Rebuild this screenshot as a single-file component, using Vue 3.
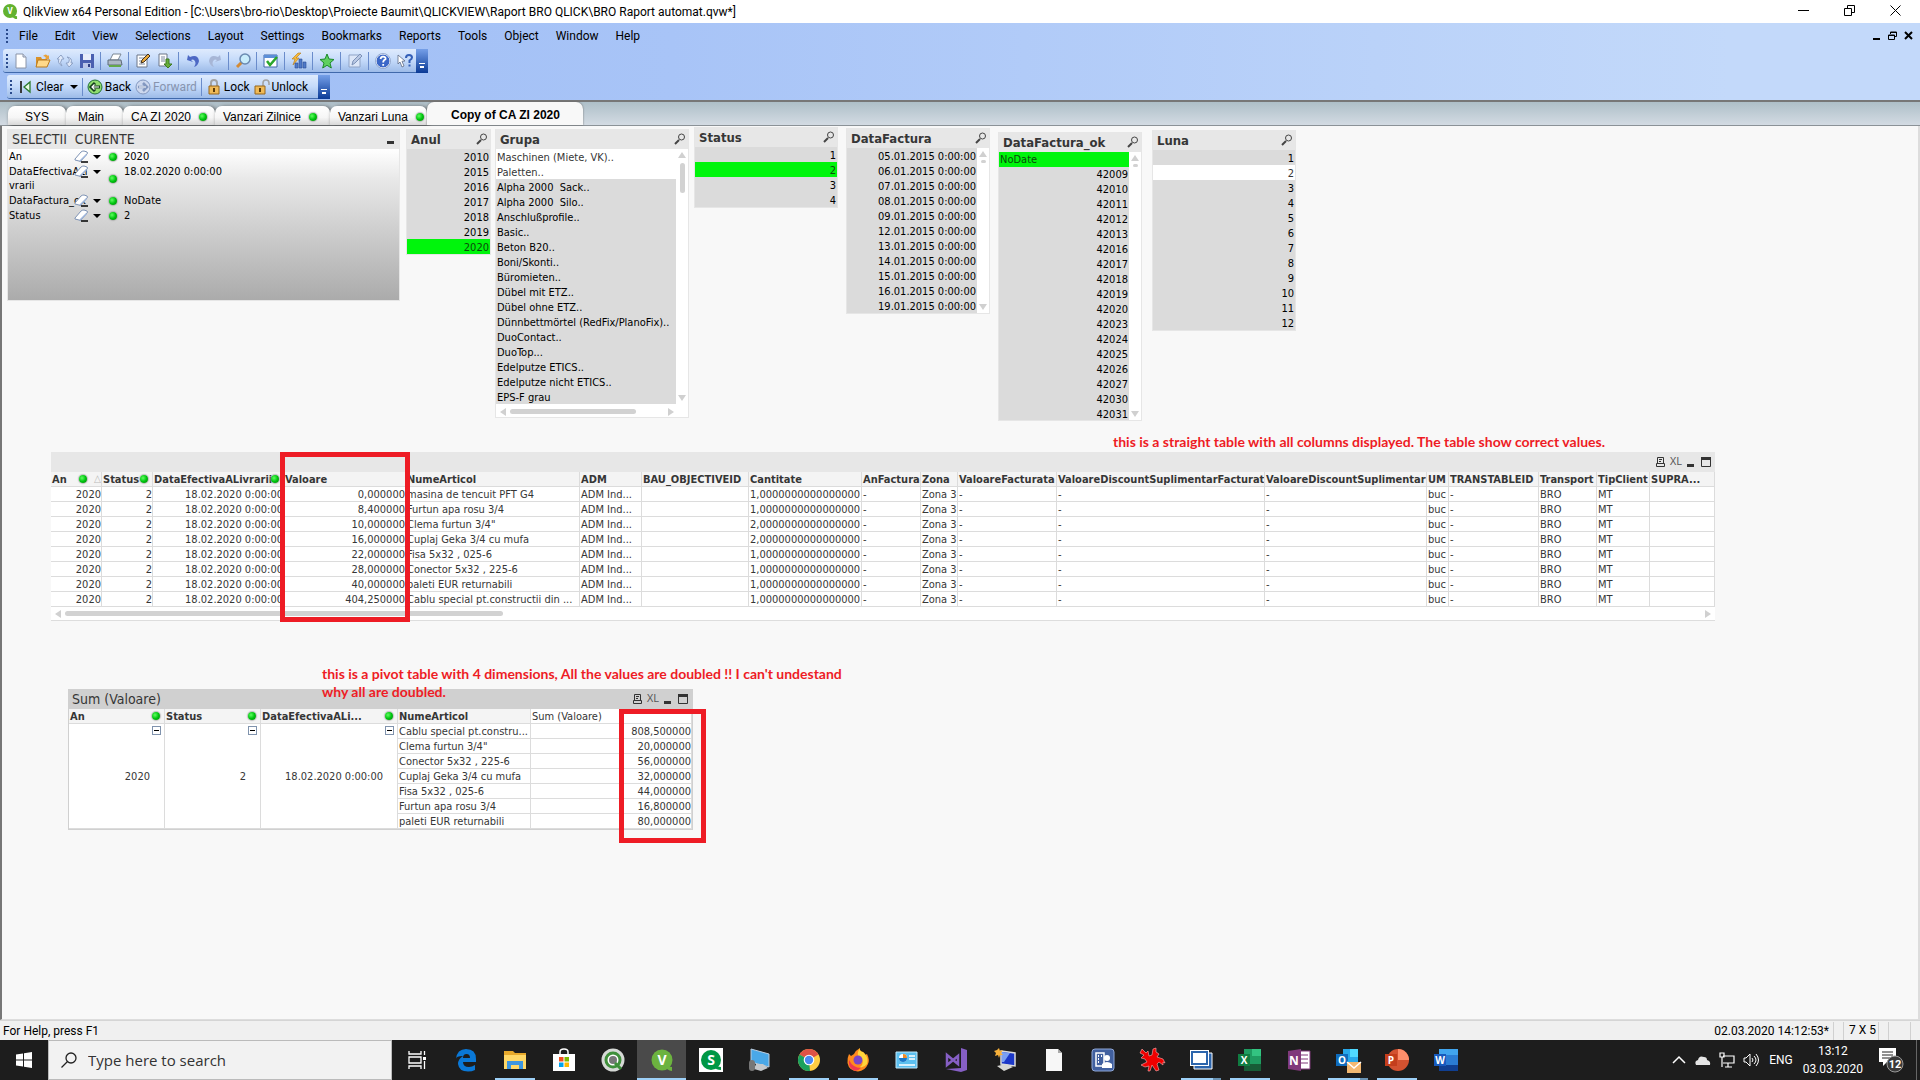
<script setup>
const menus = ['File', 'Edit', 'View', 'Selections', 'Layout', 'Settings', 'Bookmarks', 'Reports', 'Tools', 'Object', 'Window', 'Help']

const glyphs = {
  new: '<path d="M3 1h7l3 3v11H3z" fill="#fff" stroke="#8a94a8"/><path d="M10 1v3h3" fill="#d5dceb" stroke="#8a94a8"/>',
  open: '<path d="M1 4h5l1 2h5v8H1z" fill="#d9922a"/><path d="M3 7h12l-3 7H1z" fill="#ffd98a" stroke="#b87a20"/><path d="M8 3q3-3 5 0l1-1v4h-4l1-1q-1-2-3-2z" fill="#e9a23b"/>',
  reload: '<path d="M5 13q-3-3 0-7h2L4 2 0 6h2q-2 4 3 7z" fill="#dfe8f8" stroke="#8fa3c6"/><path d="M10 4q4 2 1 6H9l3 4 4-4h-2q2-5-4-6z" fill="#dfe8f8" stroke="#8fa3c6"/>',
  save: '<path d="M1 1h14v14H1z" fill="#4a5fb0"/><path d="M4 1h8v6H4z" fill="#e8edfa"/><path d="M4 10h8v5H4z" fill="#b9c4e6"/><path d="M9 11h2v3H9z" fill="#2d3d85"/>',
  print: '<path d="M6 1h8l-3 6H3z" fill="#fff" stroke="#7b8794"/><path d="M1 7h13l1 5H1z" fill="#aeb9c6" stroke="#5f6c7a"/><path d="M2 12h12v2H2z" fill="#63a84a"/>',
  edit: '<path d="M2 2h10v12H2z" fill="#fff" stroke="#6d7788"/><path d="M4 5h5M4 8h5M4 11h6" stroke="#7e8aa0"/><path d="M6 10l1-3 6-6 2 2-6 6z" fill="#e8a83a" stroke="#403020"/>',
  load: '<path d="M2 1h8v12H2z" fill="#fff" stroke="#6d7788"/><path d="M4 4h4M4 6h4M4 8h4" stroke="#7e8aa0"/><path d="M9 6h3v5h3l-4 4-4-4h2z" fill="#66ad3a" stroke="#3d7a20"/>',
  undo: '<path d="M2 7l1-5 2 2q8-3 9 4-1 5-5 6 3-4 0-7-1-1-3 0l2 2z" fill="#4d68c4"/>',
  redo: '<path d="M14 7l-1-5-2 2Q3 1 2 8q1 5 5 6-3-4 0-7 1-1 3 0L8 9z" fill="#a7b6d6"/>',
  search: '<path d="M2 14l5-5" stroke="#d48b35" stroke-width="3"/><circle cx="10" cy="6" r="5" fill="#c8ecfb" stroke="#6a89b0" stroke-width="1.500"/>',
  check: '<path d="M1 2h13v12H1z" fill="#fff" stroke="#4167a8"/><path d="M1 2h13v3H1z" fill="#5c8fd8"/><path d="M4 8l3 4 7-8" fill="none" stroke="#2aa62a" stroke-width="2.500"/>',
  chart: '<path d="M7 0L1 6h3l-2 6 6-7H5l5-5z" fill="#f6b93b" stroke="#b47a1a" stroke-width=".6"/><path d="M4 10h3v5H4zM8 6h3v9H8zM12 9h3v6h-3z" fill="#4f79c8" stroke="#2b4d94" stroke-width=".6"/>',
  star: '<path d="M8 1l2 5 5 .5-4 3.500 1.300 5L8 12.300 3.700 15 5 10 1 6.500 6 6z" fill="#5fd060" stroke="#1d8a2a"/>',
  note: '<path d="M2 2h11v12H2z" fill="#dce6f8" stroke="#8fa3c6"/><path d="M5 12l1-4 7-7 2 2-7 7z" fill="#b9c8e4" stroke="#7d92b8"/>',
  help: '<circle cx="8" cy="8" r="7" fill="#3b67c8" stroke="#fff"/><circle cx="8" cy="8" r="7.500" fill="none" stroke="#7890bd" stroke-width=".7"/><path d="M5.500 6Q6 3.500 8.200 3.700 11 4 10.500 6.200 8 7.500 8.200 9.500M8.200 11v1.800" fill="none" stroke="#fff" stroke-width="1.800"/>',
  what: '<path d="M1 2l7 6-3 .3 2 4.700-2 1-2-5-2 2z" fill="#fff" stroke="#5d6b85" stroke-width=".8"/><path d="M9 5q0-3 3-3t3 2.500Q15 6 12.500 7.500V10M12.500 11.500v2" fill="none" stroke="#3560b8" stroke-width="2"/>',
  clear: '<path d="M3 2v12" stroke="#3a3a3a" stroke-width="2"/><path d="M12 3v10L6 8z" fill="#e9fbe4" stroke="#2c7a2c" stroke-width="1.300"/>',
  back: '<circle cx="8" cy="8" r="7" fill="#8fdc6e" stroke="#22703a"/><path d="M13 8H5M8 4L4 8l4 4" fill="none" stroke="#123c1c" stroke-width="3"/><path d="M12 8H5M7.500 5.500L5 8l2.500 2.500" fill="none" stroke="#fff" stroke-width="1.200"/>',
  forward: '<circle cx="8" cy="8" r="7" fill="#cdd8ee" stroke="#8398c0"/><path d="M3 8h8M8 4l4 4-4 4" fill="none" stroke="#8398c0" stroke-width="2.600"/><path d="M4 8h7" stroke="#fff"/>',
  lock: '<path d="M5 8V4q0-3 3-3t3 3v4" fill="none" stroke="#a3a3a3" stroke-width="2"/><path d="M3 7h10v8H3z" fill="#f0ba57" stroke="#96671c"/><path d="M7 9h2v4H7z" fill="#5c3c0a"/>',
  unlock: '<path d="M9 7V4q0-3 3-3t3 3v2" fill="none" stroke="#a3a3a3" stroke-width="1.600"/><path d="M1 7h10v8H1z" fill="#f0ba57" stroke="#96671c"/><path d="M5 9h2v4H5z" fill="#5c3c0a"/>',
  lens: '<path d="M1 11l4-4" stroke="#444" stroke-width="2"/><circle cx="7.500" cy="4" r="3" fill="none" stroke="#444"/>',
  eraser: '<path d="M1 9l6-7q1-1 3-1l3 1q1 1 0 2l-6 7q-1 1-2 0L1 10z" fill="#fff" stroke="#7e93b5"/><path d="M5 11l7-7 1 1-6 6z" fill="#9fb6da"/><path d="M7 12h7" stroke="#000" stroke-width="1.500"/>',
  printer: '<path d="M2.500 1.500h6v6h-6zM1.500 7.500h8v3h-8zM4 3.500h3M4 5.500h2" fill="none" stroke="#333"/>',
  min: '<path d="M2 8h7v3H2z" fill="#333"/>',
  max: '<path d="M1.500 1.500h9v9h-9z" fill="none" stroke="#333"/><path d="M1 1h10v3H1z" fill="#333"/>',
}

const toolbar = [['new', 'open', 'reload', 'save'], ['print'], ['edit', 'load'], ['undo', 'redo'], ['search'], ['check'], ['chart'], ['star'], ['note'], ['help', 'what']]

const tabs = [
  { id: 'sys', name: 'SYS' }, { id: 'main', name: 'Main' }, { id: 'ca', name: 'CA ZI 2020', dot: true },
  { id: 'zilnice', name: 'Vanzari Zilnice', dot: true }, { id: 'luna', name: 'Vanzari Luna', dot: true },
  { id: 'copy', name: 'Copy of CA ZI 2020', active: true },
]

const selections = [
  { label: ['An'], value: '2020' },
  { label: ['DataEfectivaALi', 'vrarii'], value: '18.02.2020 0:00:00' },
  { label: ['DataFactura_ok'], value: 'NoDate' },
  { label: ['Status'], value: '2' },
]

const lists = [
  { id: 'anul', title: 'Anul', items: ['2010', '2015', '2016', '2017', '2018', '2019', '2020'], selected: '2020' },
  {
    id: 'grupa', title: 'Grupa', scroll: true, hscroll: true, possible: ['Maschinen (Miete, VK)..', 'Paletten..'],
    items: ['Maschinen (Miete, VK)..', 'Paletten..', 'Alpha 2000  Sack..', 'Alpha 2000  Silo..', 'Anschlußprofile..', 'Basic..', 'Beton B20..', 'Boni/Skonti..', 'Büromieten..', 'Dübel mit ETZ..', 'Dübel ohne ETZ..', 'Dünnbettmörtel (RedFix/PlanoFix)..', 'DuoContact..', 'DuoTop...', 'Edelputze ETICS..', 'Edelputze nicht ETICS..', 'EPS-F grau'],
  },
  { id: 'status', title: 'Status', items: ['1', '2', '3', '4'], selected: '2' },
  { id: 'factura', title: 'DataFactura', scroll: true, items: ['05', '06', '07', '08', '09', '12', '13', '14', '15', '16', '19'].map(d => `${d}.01.2015 0:00:00`) },
  { id: 'facturaok', title: 'DataFactura_ok', scroll: true, selected: 'NoDate', items: ['NoDate', '42009', '42010', '42011', '42012', '42013', '42016', '42017', '42018', '42019', '42020', '42023', '42024', '42025', '42026', '42027', '42030', '42031'] },
  { id: 'luna', title: 'Luna', possible: ['2'], items: ['1', '2', '3', '4', '5', '6', '7', '8', '9', '10', '11', '12'] },
]

const columns = [
  { name: 'An', w: 51, dot: true, sort: true, right: true }, { name: 'Status', w: 51, dot: true, right: true },
  { name: 'DataEfectivaALivrarii', w: 131, dot: true, right: true }, { name: 'Valoare', w: 122, right: true },
  { name: 'NumeArticol', w: 174 }, { name: 'ADM', w: 62 }, { name: 'BAU_OBJECTIVEID', w: 107 }, { name: 'Cantitate', w: 113 },
  { name: 'AnFactura', w: 59 }, { name: 'Zona', w: 37 }, { name: 'ValoareFacturata', w: 99 },
  { name: 'ValoareDiscountSuplimentarFacturat', w: 208 }, { name: 'ValoareDiscountSuplimentar', w: 162 }, { name: 'UM', w: 22 },
  { name: 'TRANSTABLEID', w: 90 }, { name: 'Transport', w: 58 }, { name: 'TipClient', w: 53 }, { name: 'SUPRA...', w: 65 },
]
const rows = [
  ['0,000000', 'masina de tencuit PFT G4', 1], ['8,400000', 'Furtun apa rosu 3/4', 1], ['10,000000', 'Clema furtun 3/4"', 2],
  ['16,000000', 'Cuplaj Geka 3/4 cu mufa', 2], ['22,000000', 'Fisa 5x32 , 025-6', 1], ['28,000000', 'Conector 5x32 , 225-6', 1],
  ['40,000000', 'paleti EUR returnabili', 1], ['404,250000', 'Cablu special pt.constructii din ...', 1],
].map(([v, n, q]) => ['2020', '2', '18.02.2020 0:00:00', v, n, 'ADM Ind...', '', `${q},0000000000000000`, '-', 'Zona 3', '-', '-', '-', 'buc', '-', 'BRO', 'MT', ''])

const pivot = [
  ['Cablu special pt.constru...', '808,500000'], ['Clema furtun 3/4"', '20,000000'], ['Conector 5x32 , 225-6', '56,000000'],
  ['Cuplaj Geka 3/4 cu mufa', '32,000000'], ['Fisa 5x32 , 025-6', '44,000000'], ['Furtun apa rosu 3/4', '16,800000'], ['paleti EUR returnabili', '80,000000'],
]

const T = (x, y, s, size = 12, fill = '#fff') => `<text x="${x}" y="${y}" font-family="Open Sans, sans-serif" font-weight="700" font-size="${size}" text-anchor="middle" fill="${fill}">${s}</text>`
const apps = [
  { id: 'Task View', g: '<path d="M4 3v3h12V3M4 21v-3h12v3M4 9h12v6H4zM19.500 3v4M19.500 13v8" fill="none" stroke="#fff" stroke-width="1.300"/><path d="M18 9h3v3h-3z" fill="#fff"/>' },
  { id: 'Edge', g: '<path d="M2 11Q3 1 12 1q10 0 10 10v3H9q0 5 6 5 3 0 6-2v5q-3 1.500-7 1.500Q5 23.500 4 16q0-5 5-8-7 0-7 3zM9 10h7q0-4-3.500-4T9 10z" fill="#0a78d7"/>' },
  { id: 'Explorer', run: true, g: '<path d="M1 3h9l2 2h11v16H1z" fill="#e7a92b"/><path d="M1 7h22v14H1z" fill="#ffd867"/><path d="M4 21v-8h16v8h-4v-4H8v4z" fill="#3d96e0"/>' },
  { id: 'Store', g: '<path d="M8 7V4q0-3 4-3t4 3v3" fill="none" stroke="#fff" stroke-width="1.500"/><path d="M1 6h22v17H1z" fill="#fff"/><path d="M7 9h4.500v4.500H7z" fill="#f25022"/><path d="M12.500 9H17v4.500h-4.500z" fill="#7fba00"/><path d="M7 14.500h4.500V19H7z" fill="#00a4ef"/><path d="M12.500 14.500H17V19h-4.500z" fill="#ffb900"/>' },
  { id: 'Qlik', g: '<circle cx="12" cy="12" r="11.500" fill="#d6d9d6"/><circle cx="12" cy="12" r="7" fill="#fff" stroke="#3f8f3a" stroke-width="3"/><circle cx="12" cy="12" r="4" fill="#777"/><path d="M14 15l6 6" stroke="#3f8f3a" stroke-width="3"/>' },
  { id: 'QlikView', run: true, active: true, g: '<circle cx="12" cy="12" r="10.500" fill="#6cb33f"/><path d="M15 18l7 1v4q-5-1-7-4z" fill="#6cb33f"/>' + T(12, 17, 'V', 14) },
  { id: 'Qlik Sense', g: '<path d="M0 0h24v24H0z" fill="#fff"/><circle cx="12" cy="12" r="10" fill="#009845"/><path d="M15 18l7 1v3q-5 0-7-3z" fill="#009845"/>' + T(12, 17, 'S', 14) },
  { id: 'Computer', g: '<path d="M3 1l18 5v13L3 14z" fill="#4aa8e8" stroke="#bcd" stroke-width="1"/><path d="M8 16h7l5 4-7 3-7-2z" fill="#c4c8cc"/><rect x="1" y="12" width="6" height="11" rx="3" fill="#777"/>' },
  { id: 'Chrome', run: true, g: '<circle cx="12" cy="12" r="11" fill="#ffcd42"/><path d="M12 12L2.500 6.500a11 11 0 0 1 19 0z" fill="#de5246"/><path d="M12 12l1 11A11 11 0 0 1 2.500 6.500z" fill="#1aa15f"/><circle cx="12" cy="12" r="5.300" fill="#fff"/><circle cx="12" cy="12" r="4.200" fill="#4a89f3"/>' },
  { id: 'Firefox', run: true, g: '<path d="M3 6l2 2 3-2q2-4 6-6-1 3 3 4 2 1 2 3l2-1q3 6 1 10-3 7-10 7.500Q3 23 1.500 15 1 10 3 6z" fill="#ff8a1e"/><path d="M14 0q-1 3 3 4 6 5 4 12-3 4-7 3 6-5-1-10-3-3 1-9z" fill="#ffd53a"/><path d="M3 12q4 8 12 8-4 4-8 2-5-3-4-10z" fill="#f0384f"/><circle cx="12" cy="12" r="4.500" fill="#7a45c8"/>' },
  { id: 'Control Panel', g: '<path d="M1 4h21v16H1z" fill="#5cc0f0" stroke="#bfe8fb"/><circle cx="8" cy="10" r="4" fill="#fff"/><path d="M8 10V6a4 4 0 0 1 4 4z" fill="#f08a24"/><path d="M4 10a4 4 0 0 0 8 0H8z" fill="#1b78c8"/><path d="M14 8h6M14 11h6M4 17h16" stroke="#fff" stroke-width="1.500"/>' },
  { id: 'Visual Studio', g: '<path d="M17 0l6 2v20l-6 2L2 21l15-1z" fill="#865fc5"/><path d="M3 7l11 9V8L3 17z" fill="none" stroke="#865fc5" stroke-width="2.500"/>' },
  { id: 'Remote', g: '<path d="M8 3l14 2v13L8 16z" fill="#1c38c8" stroke="#ddd" stroke-width="1.500"/><path d="M9 4l8 1-6 9H9z" fill="#7aa0f4"/><path d="M4 18l9-2 7 3-9 4z" fill="#d8d8d4"/><path d="M6 0l1 3 3-1-2 3 2 2H7l-1 3-1-3-3 1 1-3-2-2 3-1z" fill="#f8b13a"/>' },
  { id: 'Document', g: '<path d="M4 1h12l4 4v18H4z" fill="#f7f7f7"/><path d="M16 1v4h4z" fill="#aaa"/>' },
  { id: 'Directory', g: '<rect x="1" y="1" width="22" height="22" rx="3" fill="#41609f" stroke="#8fa7d6"/><path d="M5 5h8v13H5z" fill="none" stroke="#fff" stroke-width="1.500"/><path d="M7 8h1M10 8h1M7 11h1M7 14h1" stroke="#fff" stroke-width="2"/><circle cx="16" cy="10" r="3" fill="#fff"/><path d="M11 20v-4q5-4 10 0v4z" fill="#fff"/>' },
  { id: 'IrfanView', g: '<path d="M2 1l4 4 2-2 1 5 3-1 1-6 3-1v4l3 2-2 3 6 2 2 4-2-1v3l-4-3-2 2 2 6-3 1-4-6-2 6H8l1-5-4 1-4-2 6-3-2-3-4-1 3-3-4-2z" fill="#f00000" stroke="#ffb0b0" stroke-width=".6"/>' },
  { id: 'Remote Desktop', run: true, stacked: true, g: '<path d="M5 5h18v16H5z" fill="#2c65ac" stroke="#fff"/><path d="M1 2h19v16H1z" fill="#fff"/><path d="M3 4h15v12H3z" fill="#fff" stroke="#2c65ac" stroke-width="2"/>' },
  { id: 'Excel', run: true, g: '<path d="M6 1h17v22H6z" fill="#1f9c61"/><path d="M14 1h9v7h-9z" fill="#33c481"/><path d="M6 16h17v7H6z" fill="#185c37"/><path d="M0 6h12v12H0z" fill="#107c41"/>' + T(6, 16, 'X', 10) },
  { id: 'OneNote', g: '<path d="M12 3h11v18H12z" fill="#fff" stroke="#80397b"/><path d="M14 7h7M14 11h7M14 15h7" stroke="#80397b"/><path d="M1 3l13-2v22L1 21z" fill="#80397b"/>' + T(7, 17, 'N', 12) },
  { id: 'Outlook', run: true, stacked: true, g: '<path d="M7 1h15v17H7z" fill="#28a8ea"/><path d="M14 1h8v8h-8z" fill="#50d9ff"/><path d="M0 6h12v12H0z" fill="#0f6cbd"/><path d="M11 14h14v11H11z" fill="#f3b871"/><path d="M11 14l7 6 7-6" fill="none" stroke="#fff" stroke-width="1.500"/>' + T(6, 16, 'O', 10) },
  { id: 'PowerPoint', run: true, g: '<circle cx="13" cy="12" r="11" fill="#d35230"/><path d="M13 1a11 11 0 0 1 11 11H13z" fill="#ff8f6b"/><path d="M0 6h12v12H0z" fill="#c43e1c"/>' + T(6, 16, 'P', 10) },
  { id: 'Word', g: '<path d="M5 1h19v22H5z" fill="#2b7cd3"/><path d="M5 1h19v6H5z" fill="#41a5ee"/><path d="M5 17h19v6H5z" fill="#103f91"/><path d="M0 6h12v12H0z" fill="#185abd"/>' + T(6, 16, 'W', 10) },
]
</script>

<template>
  <div class="window">
    <header class="titlebar">
      <svg class="logo" viewBox="0 0 16 16"><circle cx="7.500" cy="7.500" r="7.500" fill="#62b22f" /><path d="M10 12l5 1v3q-4 0-5-3z" fill="#62b22f" /><text x="7.500" y="11" font-size="9" font-weight="700" text-anchor="middle" fill="#fff">V</text></svg>
      <h1>QlikView x64 Personal Edition - [C:\Users\bro-rio\Desktop\Proiecte Baumit\QLICKVIEW\Raport BRO QLICK\BRO Raport automat.qvw*]</h1>
      <div class="wincontrols">
        <button aria-label="Minimize"><svg viewBox="0 0 11 11"><path d="M0 5.500h11" stroke="#000" /></svg></button>
        <button aria-label="Restore"><svg viewBox="0 0 11 11"><path d="M.500 3.500h7v7h-7zM3.500 3V.500h7v7H8" fill="none" stroke="#000" /></svg></button>
        <button aria-label="Close"><svg viewBox="0 0 11 11"><path d="M.500.500l10 10M10.500.500l-10 10" stroke="#000" /></svg></button>
      </div>
    </header>

    <div class="bars">
      <nav class="menubar">
        <i class="grip"></i>
        <button v-for="m in menus" :key="m">{{ m }}</button>
        <div class="doccontrols">
          <button aria-label="Minimize document"><svg viewBox="0 0 9 9"><path d="M1 8h7" stroke="#000" stroke-width="2" /></svg></button>
          <button aria-label="Restore document"><svg viewBox="0 0 9 9"><path d="M.500 4h6v4.500h-6zM2.500 3V1h6v4.500h-2M.500 4.500h6M2.500 1.500h6" fill="none" stroke="#000" /></svg></button>
          <button aria-label="Close document"><svg viewBox="0 0 9 9"><path d="M1 1l7 7M8 1L1 8" stroke="#000" stroke-width="2" /></svg></button>
        </div>
      </nav>
      <div class="toolbar">
        <i class="grip"></i>
        <div v-for="(g, i) in toolbar" :key="i" class="group">
          <button v-for="n in g" :key="n" :aria-label="n"><svg viewBox="0 0 16 16" v-html="glyphs[n]"></svg></button>
        </div>
        <button class="more" aria-label="Toolbar options"><i></i></button>
      </div>
      <div class="toolbar second">
        <i class="grip"></i>
        <div class="group">
          <button><svg viewBox="0 0 16 16" v-html="glyphs.clear"></svg>Clear<i class="caret"></i></button>
        </div>
        <div class="group">
          <button><svg viewBox="0 0 16 16" v-html="glyphs.back"></svg>Back</button>
          <button class="dim"><svg viewBox="0 0 16 16" v-html="glyphs.forward"></svg>Forward</button>
        </div>
        <div class="group">
          <button><svg viewBox="0 0 16 16" v-html="glyphs.lock"></svg>Lock</button>
          <button><svg viewBox="0 0 16 16" v-html="glyphs.unlock"></svg>Unlock</button>
        </div>
        <button class="more" aria-label="Toolbar options"><i></i></button>
      </div>
    </div>

    <nav class="tabs">
      <button v-for="t in tabs" :key="t.id" :class="[t.id, { active: t.active }]">{{ t.name }}<i v-if="t.dot" class="dot"></i></button>
    </nav>

    <main class="sheet">
      <div class="listrow">
        <section class="box current">
          <header><h2>SELECTII&nbsp; CURENTE</h2><button aria-label="Minimize"><svg viewBox="0 0 12 12" v-html="glyphs.min"></svg></button></header>
          <dl>
            <div v-for="s in selections" :key="s.label[0]">
              <dt><span v-for="l in s.label" :key="l">{{ l }}</span></dt>
              <dd>
                <button aria-label="Clear field"><svg viewBox="0 0 15 13" v-html="glyphs.eraser"></svg></button>
                <i class="caret"></i><i class="dot"></i><span>{{ s.value }}</span>
              </dd>
            </div>
          </dl>
        </section>

        <section v-for="l in lists" :key="l.id" class="box" :class="l.id">
          <header><h2>{{ l.title }}</h2><button aria-label="Search"><svg viewBox="0 0 12 12" v-html="glyphs.lens"></svg></button></header>
          <div class="listbody">
            <ul>
              <li v-for="i in l.items" :key="i" :class="{ on: i === l.selected, open: l.possible?.includes(i), text: i === 'NoDate' }">{{ i }}</li>
            </ul>
            <div v-if="l.scroll" class="vscroll"><i class="up"></i><i class="thumb"></i><i class="down"></i></div>
          </div>
          <div v-if="l.hscroll" class="hscroll"><i class="left"></i><i class="thumb"></i><i class="right"></i></div>
        </section>
      </div>

      <section class="straight">
        <p class="note">this is a straight table with all columns displayed. The table show correct values.</p>
        <header>
          <button aria-label="Print"><svg viewBox="0 0 12 12" v-html="glyphs.printer"></svg></button>
          <button class="xl">XL</button>
          <button aria-label="Minimize"><svg viewBox="0 0 12 12" v-html="glyphs.min"></svg></button>
          <button aria-label="Maximize"><svg viewBox="0 0 12 12" v-html="glyphs.max"></svg></button>
        </header>
        <table>
          <colgroup><col v-for="c in columns" :key="c.name" :style="{ width: c.w + 'px' }"></colgroup>
          <thead><tr><th v-for="c in columns" :key="c.name">{{ c.name }}<i v-if="c.sort" class="sort">△</i><i v-if="c.dot" class="dot"></i></th></tr></thead>
          <tbody><tr v-for="(r, k) in rows" :key="k"><td v-for="(v, j) in r" :key="j" :class="{ num: columns[j].right }">{{ v }}</td></tr></tbody>
        </table>
        <div class="hscroll"><i class="left"></i><i class="thumb"></i><i class="right"></i></div>
        <div class="mark"></div>
      </section>

      <section class="pivot">
        <p class="note">this is a pivot table with 4 dimensions, All the values are doubled !! I can't undestand<br>why all are doubled.</p>
        <header>
          <h2>Sum (Valoare)</h2>
          <button aria-label="Print"><svg viewBox="0 0 12 12" v-html="glyphs.printer"></svg></button>
          <button class="xl">XL</button>
          <button aria-label="Minimize"><svg viewBox="0 0 12 12" v-html="glyphs.min"></svg></button>
          <button aria-label="Maximize"><svg viewBox="0 0 12 12" v-html="glyphs.max"></svg></button>
        </header>
        <table>
          <colgroup><col class="c1"><col class="c2"><col class="c3"><col class="c4"><col class="c5"><col></colgroup>
          <thead><tr><th>An<i class="dot"></i></th><th>Status<i class="dot"></i></th><th>DataEfectivaALi...<i class="dot"></i></th><th>NumeArticol</th><th class="plain">Sum (Valoare)</th><th class="plain"></th></tr></thead>
          <tbody>
            <tr v-for="(p, k) in pivot" :key="k">
              <template v-if="k === 0">
                <td v-for="v in ['2020', '2', '18.02.2020 0:00:00']" :key="v" :rowspan="pivot.length" class="dim">{{ v }}<button aria-label="Collapse"></button></td>
              </template>
              <td>{{ p[0] }}</td><td></td><td class="num">{{ p[1] }}</td>
            </tr>
          </tbody>
        </table>
        <div class="mark"></div>
      </section>
    </main>

    <footer class="status"><span>For Help, press F1</span><span class="stamp">02.03.2020 14:12:53*</span><span class="cell small"></span><span class="cell size">7 X 5</span><span class="cell small"></span><span class="cell end"></span><span class="cell small"></span></footer>

    <div class="taskbar">
      <button class="start" aria-label="Start"><svg viewBox="0 0 16 16"><path d="M0 2.500l7-1v6H0zM8 1.300L16 0v7.500H8zM0 8.500h7v6l-7-1zM8 8.500h8V16l-8-1.300z" fill="#fff" /></svg></button>
      <label class="search"><svg viewBox="0 0 16 16"><circle cx="10" cy="6" r="5" fill="none" stroke="#222" stroke-width="1.300" /><path d="M6.500 9.500L.500 15.500" stroke="#222" stroke-width="1.300" /></svg><input type="text" placeholder="Type here to search"></label>
      <button v-for="a in apps" :key="a.id" class="app" :class="{ run: a.run, active: a.active, stacked: a.stacked }" :aria-label="a.id"><svg viewBox="0 0 24 24" v-html="a.g"></svg></button>
      <div class="tray">
        <svg viewBox="0 0 16 16"><path d="M2 11l6-6 6 6" fill="none" stroke="#fff" stroke-width="1.500" /></svg>
        <svg viewBox="0 0 16 16"><path d="M1 13q-2-4 2-5 1-5 6-3 3 0 3 3 4 1 3 5z" fill="#e5e5e5" /></svg>
        <svg viewBox="0 0 16 16"><path d="M4 4h11v7H4M9 11v4M6 15h7M1 1h4v4H1zM3 5v10" fill="none" stroke="#fff" stroke-width="1.200" /></svg>
        <svg viewBox="0 0 16 16"><path d="M1 6h2l4-4v12l-4-4H1zM9 6q2 2 0 4M11 4q4 4 0 8M13 2q5 6 0 12" fill="none" stroke="#fff" /></svg>
        <span>ENG</span>
        <time>13:12<br>03.03.2020</time>
        <button aria-label="Notifications"><svg viewBox="0 0 26 26"><path d="M1 1h17v14H9l-4 4v-4H1z" fill="#fff" /><path d="M4 5h11M4 8h11M4 11h8" stroke="#222" /><circle cx="17" cy="17" r="8" fill="#3a3a3a" stroke="#999" /><text x="17" y="21" font-size="11" font-weight="700" text-anchor="middle" fill="#fff">12</text></svg></button>
        <i class="peek"></i>
      </div>
    </div>
  </div>
</template>

<style>
body { margin: 0; }
</style>

<style scoped>
.window { min-height: 100vh; display: flex; flex-direction: column; background: #f8f8f8; font: 12px/16px Roboto, "Open Sans", sans-serif; color: #000; overflow: hidden; }
.window * { box-sizing: border-box; }
button { border: 0; margin: 0; padding: 0; background: none; font: inherit; color: inherit; display: inline-flex; align-items: center; justify-content: center; flex: none; }
h1, h2, p, dl, dd, ul { margin: 0; padding: 0; font: inherit; }
svg { display: block; flex: none; overflow: visible; }
i { display: block; flex: none; font-style: normal; }
.dot { width: 8px; height: 8px; border-radius: 4px; background: radial-gradient(circle at 3px 3px, #5fff5f, #00c410 50%, #087a08); box-shadow: 0 0 1px 1px #9999; }
.caret { width: 0; height: 0; border: 4px solid transparent; border-top-color: #000; border-bottom: 0; }

.titlebar { height: 23px; display: flex; align-items: center; background: #fff; padding-left: 3px; }
.logo { width: 15px; height: 15px; margin-right: 5px; }
.titlebar h1 { flex: 1; white-space: nowrap; }
.wincontrols button { width: 46px; height: 20px; }
.wincontrols svg { width: 11px; height: 11px; }
.wincontrols { margin-right: 2px; display: flex; align-self: flex-start; }

.bars { height: 77px; background: linear-gradient(90deg, #9ebdf4, #a8c4f7 35%, #c3d9fa 90%); display: flex; flex-direction: column; align-items: flex-start; gap: 2px; }
.menubar { align-self: stretch; height: 24px; display: flex; align-items: center; padding: 2px 0 0 6px; gap: 17px; }
.grip { width: 2px; height: 14px; background: repeating-linear-gradient(#2a4a8c 0 2px, transparent 2px 4px); }
.menubar .grip { margin-right: -6px; }
.doccontrols { margin-left: auto; display: flex; gap: 7px; padding: 0 7px 2px 0; }
.doccontrols svg { width: 9px; height: 9px; }
.toolbar { height: 24px; margin-left: 3px; display: flex; align-items: center; padding-left: 3px; background: linear-gradient(#dfebfd, #c4dafa 50%, #9dbbe8); border-bottom: 1px solid #4069ab; border-radius: 3px 0 0 3px; }
.second { margin-left: 7px; }
.group { display: flex; align-items: center; height: 18px; padding: 0 2px 0 3px; border-right: 1px solid #6a8ccb; }
.toolbar .grip + .group { padding-left: 2px; }
.group:nth-last-child(2) { border-right: 0; padding-right: 0; }
.toolbar .group button { width: 22px; height: 20px; }
.toolbar .group svg { width: 16px; height: 16px; }
.second .group { padding: 0 4px; gap: 4px; }
.second .grip + .group { padding: 0 4px 0 6px; }
.second .group button { width: auto; gap: 2px; }
.second .caret { margin-left: 4px; }
.second .dim { color: #8794ae; }
.more { width: 12px; height: 24px; background: linear-gradient(#759fe8, #0a3a96); align-items: flex-end; padding-bottom: 4px; }
.second .more { margin-left: 6px; }
.more i { width: 6px; height: 6px; border-top: 1px solid #fff; background: linear-gradient(#fff, #fff) center 2px / 4px 2px no-repeat; }

.tabs { height: 26px; border-top: 2px solid #777; border-bottom: 1px solid #8b9297; background: linear-gradient(#aebfc8, #d3dbe3); display: flex; align-items: flex-end; padding-left: 8px; }
.tabs button { height: 19px; border-radius: 7px 7px 0 0; box-shadow: 2px 1px 4px #444; gap: 8px; font: 12px/16px "Liberation Sans", Arial, sans-serif; justify-content: flex-start; padding: 2px 0 0 8px; white-space: nowrap; overflow: hidden; background: linear-gradient(#fff, #f6f6f6 60%, #d8d8d8); }
.tabs .sys { width: 58px; padding-left: 17px; }
.tabs .main { width: 57px; padding-left: 12px; }
.tabs .ca { width: 92px; }
.tabs .zilnice { width: 115px; }
.tabs .luna { width: 97px; }
.tabs .active { width: 156px; height: 23px; background: #f8f8f8; font-weight: 700; padding-left: 24px; box-shadow: 0 0 2px #666; }

.sheet { flex: 1 0 auto; background: #f8f8f8; border-left: 2px solid #777; border-right: 2px solid #ddd; border-bottom: 1px solid #ddd; font: 11px/15px "DejaVu Sans Condensed", "DejaVu Sans", sans-serif; padding: 1px 0 40px 5px; }
.listrow { display: flex; align-items: flex-start; }
.box { border: 1px solid #e6e6e6; border-top: 0; background: #fff; }
.box header { height: 20px; background: #e7e7e7; display: flex; align-items: center; justify-content: space-between; padding: 0 2px 0 4px; }
.box h2 { font-size: 13px; font-weight: 700; color: #363636; white-space: nowrap; }
.box header svg { width: 12px; height: 12px; }
.current, .anul, .grupa { margin-top: 2px; }
.current { width: 393px; margin-right: 6px; }
.box.current h2 { font-size: 14px; font-weight: 400; }
.current dl { height: 151px; background: linear-gradient(#fff, #e8e8e8 20%, #ababab); }
.current dl > div { display: flex; align-items: stretch; }
.current dt { width: 66px; padding: 1px 0 0 1px; white-space: nowrap; line-height: 14px; }
.current dt span { display: block; }
.current dd { display: flex; align-items: flex-start; position: relative; }
.current dd svg { width: 15px; height: 13px; margin-top: 1px; }
.current dd .caret { margin: 6px 8px 0 4px; }
.current dd .dot { margin-right: 7px; align-self: center; }
.anul { width: 85px; margin-right: 4px; }
.grupa { width: 194px; margin-right: 5px; }
.status.box, .luna.box, .factura, .facturaok { width: 144px; }
.box.status { margin-right: 8px; }
.factura { margin: 1px 8px 0 0; }
.facturaok { margin: 5px 10px 0 0; }
.luna.box { margin-top: 3px; }
.listbody { display: flex; }
.facturaok .listbody { height: 268px; overflow: hidden; }
ul { list-style: none; flex: 1; min-width: 0; background: #dbdbdb; }
li { height: 15px; line-height: 17px; padding: 0 1px; text-align: right; white-space: pre; }
.grupa li, li.text { text-align: left; }
.facturaok li { line-height: 16px; }
li.on { background: #00f50c; color: #0b4a0b; }
li.open { background: #fff; color: #363636; }
.vscroll { width: 12px; background: #fff; display: flex; flex-direction: column; align-items: center; padding: 3px 0; }
.up, .down { border: 4px solid transparent; border-bottom: 6px solid #d0d0d0; border-top: 0; }
.down { border-bottom: 0; border-top: 6px solid #d0d0d0; margin-top: auto; }
.thumb { background: #d2d2d2; border-radius: 3px; }
.vscroll .thumb { width: 5px; height: 3px; margin-top: 3px; }
.grupa .vscroll .thumb { height: 30px; margin-top: 5px; }
.hscroll { display: flex; align-items: center; height: 13px; background: #fff; padding: 0 4px; }
.left, .right { border: 4px solid transparent; border-right: 6px solid #d0d0d0; border-left: 0; }
.right { border-right: 0; border-left: 6px solid #d0d0d0; margin-left: auto; }
.hscroll .thumb { height: 5px; width: 126px; margin-left: 4px; }
.grupa .hscroll { padding: 2px 14px 0 4px; }

.straight, .pivot { position: relative; color: #363636; }
.straight { width: 1664px; margin: 31px 0 0 44px; border-bottom: 1px solid #ddd; }
.straight header, .pivot header { height: 20px; display: flex; align-items: center; background: #e7e7e7; padding-right: 3px; gap: 3px; justify-content: flex-end; }
header svg { width: 12px; height: 12px; }
.xl { font: 10px/12px "Liberation Sans", Arial, sans-serif; color: #555; }
table { border-collapse: separate; border-spacing: 0; table-layout: fixed; width: 100%; background: #fff; }
th, td { height: 15px; padding: 2px 0 0 1px; border-right: 1px solid #dcdcdc; border-bottom: 1px solid #dcdcdc; line-height: 12px; text-align: left; white-space: nowrap; overflow: hidden; position: relative; }
th { background: #f4f4f4; font-size: 11px; font-weight: 700; }
.num { text-align: right; }
th .dot { position: absolute; right: 4px; top: 3px; }
th .sort { position: absolute; right: 0; top: 1px; font-size: 10px; color: #bbb; font-weight: 400; }
th .sort + .dot { right: 14px; }
.straight .hscroll .thumb { width: 438px; }
.mark { position: absolute; border: 5px solid #ee1c25; }
.straight .mark { left: 229px; top: 0; width: 130px; height: 170px; }
.note { position: absolute; margin: 0; font: 700 14px/18px Lato, sans-serif; color: #ee1c25; white-space: nowrap; }
.straight .note { left: 1062px; top: -19px; }

.pivot { width: 625px; margin: 68px 0 0 61px; border: 1px solid #d0d0d0; border-top: 0; }
.pivot header { background: #d0d0d0; padding: 0 3px; }
.pivot h2 { font-size: 14px; flex: 1; }
.pivot .c1, .pivot .c2 { width: 96px; }
.pivot .c3 { width: 137px; }
.pivot .c4 { width: 133px; }
.pivot .c5 { width: 90px; }
.pivot .plain { background: #fff; font-weight: 400; }
.pivot .dim { text-align: right; padding-right: 14px; }
.pivot .dim button { position: absolute; right: 3px; top: 2px; width: 9px; height: 9px; border: 1px solid #8093ad; background: linear-gradient(#000, #000) center / 5px 1px no-repeat, #fff; }
.pivot .note { left: 253px; top: -24px; }
.pivot .mark { left: 550px; top: 20px; width: 87px; height: 134px; }

.status:not(.box) { height: 20px; background: #f0f0f0; border-top: 1px solid #d5d5d5; display: flex; align-items: center; padding-left: 3px; }
.stamp { margin-left: auto; padding-right: 4px; }
.cell { height: 18px; border-left: 1px solid #d0d0d0; }
.small { width: 10px; }
.size { width: 35px; padding-left: 5px; white-space: nowrap; }
.end { width: 22px; }

.taskbar { height: 40px; background: #1d1d1d; display: flex; color: #fff; }
.start { width: 48px; }
.start svg { width: 16px; height: 16px; }
.search { width: 344px; background: #f2f2f2; border: 1px solid #bbb; display: flex; align-items: center; padding-left: 12px; gap: 11px; }
.search svg { width: 16px; height: 16px; }
.search input { border: 0; background: none; flex: 1; min-width: 0; padding: 0; font: 15px/20px "Open Sans", sans-serif; outline: 0; }
.search input::placeholder { color: #333; opacity: 1; }
.app { width: 49px; height: 40px; }
.app svg { width: 24px; height: 24px; }
.run { background: linear-gradient(#9dd0f7, #9dd0f7) center bottom / 40px 2px no-repeat; }
.active.app { background: linear-gradient(#9dd0f7, #9dd0f7) center bottom / 49px 2px no-repeat, #4a4a4a; }
.stacked { background: linear-gradient(90deg, #9dd0f7 32px, #6a93b3 32px) center bottom / 40px 2px no-repeat; }
.tray { margin-left: auto; display: flex; align-items: center; gap: 8px; }
.tray > svg { width: 16px; height: 16px; }
.tray span { margin-left: 2px; }
.tray time { text-align: center; line-height: 18px; padding: 0 7px 0 2px; }
.tray button { padding-right: 4px; }
.tray button svg { width: 26px; height: 26px; }
.peek { width: 4px; height: 40px; border-left: 1px solid #666; }
</style>
